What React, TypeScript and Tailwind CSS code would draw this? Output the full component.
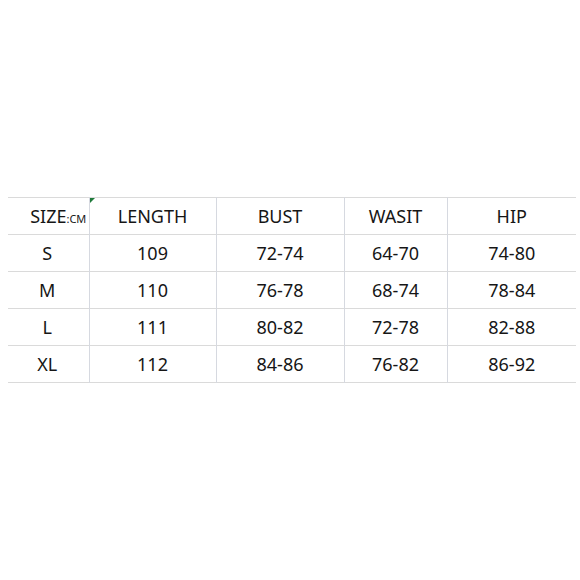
const header = ["LENGTH", "BUST", "WASIT", "HIP"];

const rows = [
  ["S", "109", "72-74", "64-70", "74-80"],
  ["M", "110", "76-78", "68-74", "78-84"],
  ["L", "111", "80-82", "72-78", "82-88"],
  ["XL", "112", "84-86", "76-82", "86-92"],
];

const widths = ["w-[81px]", "w-[127px]", "w-[128px]", "w-[103px]", "w-[129px]"];

export default function App() {
  return (
    <div className="w-[580px] h-[580px] bg-white pt-[197px] pl-[8px] font-['Noto_Sans',sans-serif] text-[18px] text-[#161616]">
      <table className="border-collapse table-fixed w-[568px]">
        <tbody>
          <tr className="h-[37px] border-t border-[#dadada]">
            <td className={`${widths[0]} relative text-center pl-[20px] whitespace-nowrap`}>
              SIZE<span className="text-[11px]">:CM</span>
            </td>
            {header.map((h, i) => (
              <td
                key={h}
                className={`${widths[i + 1]} relative text-center border-l border-[#d6d9e0]`}
              >
                {i === 0 && (
                  <span className="absolute left-0 top-0 w-0 h-0 border-t-[5px] border-r-[5px] border-t-[#1f7a3a] border-r-transparent" />
                )}
                {h}
              </td>
            ))}
          </tr>
          {rows.map((r) => (
            <tr key={r[0]} className="h-[37px] border-t border-b border-[#dadada]">
              {r.map((c, i) => (
                <td
                  key={i}
                  className={`text-center ${i > 0 ? "border-l border-[#d6d9e0]" : "pr-[2px]"}`}
                >
                  {c}
                </td>
              ))}
            </tr>
          ))}
        </tbody>
      </table>
    </div>
  );
}
